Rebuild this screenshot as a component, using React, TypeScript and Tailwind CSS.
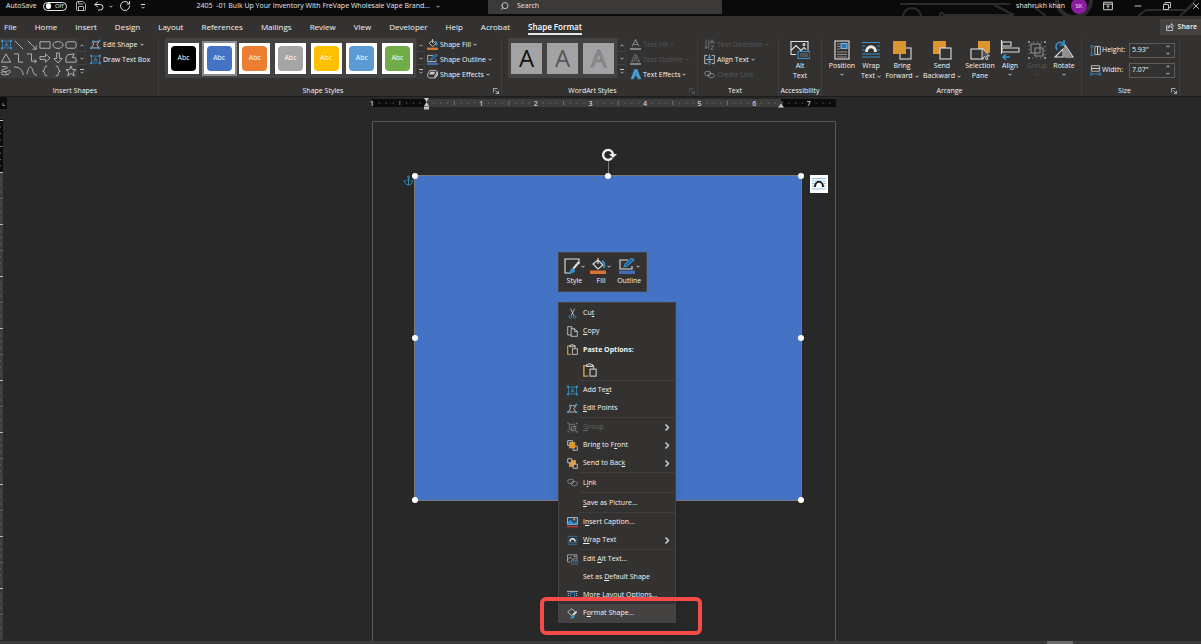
import { useState } from "react";
import type { ReactNode } from "react";
import { Minus, X, Search, Undo2, RotateCw, Anchor, Save } from "lucide-react";
import clsx from "clsx";

interface IconProps {
  children: ReactNode;
  className?: string;
  box?: string;
}

// Thin line icon, stroke follows the text colour
function Icon({ children, className = "size-[11px]", box = "0 0 16 16" }: IconProps) {
  return (
    <svg viewBox={box} className={clsx("shrink-0 opacity-90", className)} fill="none" stroke="currentColor" strokeWidth="1.1" aria-hidden="true">
      {children}
    </svg>
  );
}

function Caret({ className = "w-1 h-[3px]" }: { className?: string }) {
  return (
    <svg viewBox="0 0 8 5" className={clsx("shrink-0", className)} fill="none" stroke="currentColor" strokeWidth="1.6" aria-hidden="true">
      <path d="M1 1l3 3 3-3" />
    </svg>
  );
}

const BLUE = "#3a9bdc";
const ORANGE = "#f0a030";

// ---------- icons ----------

const TextBoxIcon = () => (
  <Icon>
    <rect x="2" y="3" width="12" height="10" stroke={BLUE} />
    <path d="M5.500 11L8 5l2.500 6M6.500 9.500h3" stroke={BLUE} />
    <path d="M0 1h3v3H0zM13 1h3v3h-3zM0 12h3v3H0zM13 12h3v3h-3z" fill={BLUE} stroke="none" />
  </Icon>
);
const EditShapeIcon = () => (
  <Icon>
    <path d="M2 13L5 8 4 4h9l-3 4 3 5H2" />
    <path d="M0 12h3v3H0zM12 12h3v3h-3zM3 2h3v3H3zM12 1h3v3h-3z" fill={BLUE} stroke="none" />
  </Icon>
);
const FillIcon = ({ className }: { className?: string }) => (
  <Icon className={className}>
    <path d="M3 6l5-4 5 5-5 4zM8 6V0" />
    <path d="M12 3c2 1 3 4 2 7" stroke={BLUE} strokeWidth="2" />
    <path d="M0 12.500h16V16H0z" fill="#ed7d31" stroke="none" />
  </Icon>
);
const OutlineIcon = ({ className }: { className?: string }) => (
  <Icon className={className}>
    <path d="M9 2H1v9h12V8" />
    <path d="M5 9l1-3 7-6 2 2-7 6z" stroke={BLUE} fill="#1d5f93" />
    <path d="M0 12.500h16V16H0z" fill="#4472c4" stroke="none" />
  </Icon>
);
const EffectsIcon = () => (
  <Icon>
    <path d="M4 2h9l2 2v5l-3 4H3l-2-2V7z" />
    <path d="M12 13l3-4V4l-4 7z" fill="#8a8a8a" />
    <path d="M5 4h7l-2 4H3z" fill="#d8d8d8" stroke="none" />
  </Icon>
);
const TextFillIcon = () => (
  <Icon className="size-[11px] text-[#8a8a8a]">
    <path d="M3 11L8 1l5 10M5 8h6" strokeWidth="1.600" />
    <path d="M0 13h16v3H0z" fill="currentColor" stroke="none" />
  </Icon>
);
const TextOutlineIcon = () => (
  <Icon className="size-[11px] text-[#8a8a8a]">
    <path d="M2 11L7 1h2l5 10h-3l-1-2H6l-1 2zM7 7h2L8 4z" />
    <path d="M0 13h16v3H0z" fill="currentColor" stroke="none" />
  </Icon>
);
const TextEffectsIcon = () => (
  <Icon>
    <path d="M2 14L7 1h3l5 13h-3l-1-4H6l-1 4zM7 8h3L8.500 4z" stroke={BLUE} strokeWidth="2" fill="#cfe8fa" />
  </Icon>
);
const TextDirectionIcon = () => (
  <Icon className="size-[11px] text-[#8a8a8a]">
    <path d="M3 1v13M1 11l2 3 2-3M7 1v13M9 7l3-6 3 6M10 5h4M10 10h4l-4 5h4" />
  </Icon>
);
const AlignTextIcon = () => (
  <Icon>
    <path d="M5 2H1v12h4M11 2h4v12h-4M3 8h10" />
    <path d="M8 0v6M6 4l2 2 2-2M8 16v-6M6 12l2-2 2 2" stroke={BLUE} strokeWidth="1.600" />
  </Icon>
);
const LinkIcon = () => (
  <Icon className="size-[11px] text-[#a0a0a0]">
    <rect x="1" y="3.500" width="9" height="6" rx="3" />
    <rect x="6" y="6.500" width="9" height="6" rx="3" />
  </Icon>
);
const AltTextIcon = ({ className }: { className?: string }) => (
  <Icon className={className} box="0 0 20 19">
    <path d="M6 14H1V1h17v9M1 10l5-5 5 5 3-3 2 2" />
    <circle cx="14" cy="4" r="1" />
    <rect x="8" y="11" width="12" height="7" stroke={BLUE} fill="#333231" />
    <path d="M10 13.500h8M10 15.500h8" stroke="#777" />
  </Icon>
);
const PositionIcon = () => (
  <Icon className="size-5" box="0 0 20 20">
    <rect x="3" y="1" width="14" height="18" />
    <path d="M5 4h3M5 6.500h3M5 9h3M5 12h10M5 14.500h10M5 17h10" stroke="#999" />
    <rect x="9" y="3.500" width="6" height="5" fill="#2b7fc0" stroke="#8fc4e8" />
  </Icon>
);
const WrapIcon = ({ className = "size-5" }: { className?: string }) => (
  <Icon className={className} box="0 0 20 20">
    <path d="M1 2.500h18M1 6h3M16 6h3M1 10h3M16 10h3M1 14h18M1 17h18" stroke={BLUE} />
    <path d="M5.500 12c0-7 9-7 9 0" strokeWidth="2.800" stroke="#fff" />
  </Icon>
);
const BringIcon = () => (
  <Icon className="size-5" box="0 0 20 20">
    <rect x="8" y="8" width="11" height="11" />
    <rect x="1" y="1" width="13" height="13" fill={ORANGE} stroke="none" />
  </Icon>
);
const SendIcon = () => (
  <Icon className="size-5" box="0 0 20 20">
    <rect x="1" y="1" width="13" height="13" fill={ORANGE} stroke="none" />
    <rect x="8" y="8" width="11" height="11" fill="#333231" />
  </Icon>
);
const SelectionIcon = () => (
  <Icon className="size-5" box="0 0 20 20">
    <rect x="8" y="1" width="12" height="12" fill={ORANGE} stroke="none" />
    <rect x="1" y="9" width="12" height="10" fill="#333231" />
    <path d="M12 8v11l2.500-2.500 2 3.500 1.500-1-1.500-3h3z" fill="#555" stroke="#eee" strokeWidth="0.900" />
  </Icon>
);
const AlignIcon = () => (
  <Icon className="size-5" box="0 0 20 20">
    <path d="M1.500 0v14M2 2h9v4H2zM2 8h17v4H2z" />
    <path d="M10 17H3M6 14L3 17l3 3" stroke={BLUE} strokeWidth="1.600" />
  </Icon>
);
const GroupIcon = ({ className = "size-5" }: { className?: string }) => (
  <Icon className={clsx("text-[#9a9a9a]", className)} box="0 0 20 20">
    <rect x="4" y="4" width="9" height="9" />
    <rect x="8" y="8" width="8" height="8" />
    <path d="M2 2h16v16H2z" strokeDasharray="1 3" />
    <path d="M1 1h2v2H1zM17 1h2v2h-2zM1 17h2v2H1zM17 17h2v2h-2z" fill="currentColor" stroke="none" />
  </Icon>
);
const RotateIcon = () => (
  <Icon className="size-5" box="0 0 20 20">
    <path d="M1 17L9 9v8zM11 17V5l8 12z" />
    <path d="M11 6v11h7z" fill="#999" stroke="none" />
    <path d="M3 10C0 4 5 0 10 4M10 0v5H6" stroke={BLUE} strokeWidth="1.600" />
  </Icon>
);
const CutIcon = () => (
  <Icon>
    <path d="M5 1l5 10M11 1L6 11" />
    <circle cx="5" cy="13" r="2" stroke={BLUE} />
    <circle cx="11" cy="13" r="2" stroke={BLUE} />
  </Icon>
);
const CopyIcon = () => (
  <Icon>
    <path d="M6 13H1V1h6v3M6 4h5l4 4v7H6zM11 4v4h4" />
  </Icon>
);
const PasteIcon = ({ className }: { className?: string }) => (
  <Icon className={className}>
    <path d="M6 15H1V3h11v4" stroke="#e8b04a" strokeWidth="1.600" />
    <path d="M4 4V2h2c0-2 3-2 3 0h2v2z" fill="#555" />
    <rect x="8" y="7" width="7" height="8" fill="#333231" />
  </Icon>
);
const FrontIcon = () => (
  <Icon>
    <path d="M1 1h7v7H1zM9 9h6v6H9z" />
    <rect x="3" y="3" width="9" height="9" fill={ORANGE} stroke="none" />
  </Icon>
);
const BackIcon = () => (
  <Icon>
    <rect x="3" y="3" width="10" height="10" fill={ORANGE} stroke="none" />
    <path d="M1 1h6v6H1zM9 9h6v6H9z" fill="#333231" />
  </Icon>
);
const CaptionIcon = () => (
  <Icon>
    <rect x="1" y="1" width="14" height="10" fill="#17466b" />
    <path d="M1 11V8l4-4 5 5 3-2 2 2v2z" fill={BLUE} stroke="none" />
    <rect x="9" y="2" width="3" height="3" fill={ORANGE} stroke="none" />
    <path d="M0 14h16" stroke="#d9363e" strokeWidth="2" />
  </Icon>
);
const LayoutIcon = () => (
  <Icon>
    <path d="M0 2h16M0 14h16M1 5h2M13 5h2M1 8h2M13 8h2M1 11h2M13 11h2" />
    <rect x="5" y="4" width="6" height="8" stroke={BLUE} />
  </Icon>
);
const FormatShapeIcon = () => (
  <Icon>
    <path d="M1 6l5-5 6 4-5 6z" />
    <path d="M14 5l-5 6" strokeWidth="2" />
    <path d="M9 10c-3 0-2 4-5 5 4 1 7 0 7-3z" fill={BLUE} stroke="none" />
  </Icon>
);
const StyleIcon = () => (
  <Icon className="size-4">
    <path d="M7 15H1V1h14v5" />
    <path d="M15 4l-6 7" strokeWidth="2" />
    <path d="M9 10c-3 0-2 4-5 5 4 1 7 0 7-3z" fill={BLUE} stroke="none" />
  </Icon>
);
const HeightIcon = () => (
  <Icon>
    <path d="M7 2h4v12H7zM11 2h4v12h-4z" />
    <path d="M2.500 2v12M0 1h5M0 15h5M1 4l1.500-2L4 4M1 12l1.500 2L4 12" stroke={BLUE} />
  </Icon>
);
const WidthIcon = () => (
  <Icon>
    <path d="M2 1h12v4H2zM2 5h12v4H2z" />
    <path d="M2 13h12M1 10v6M15 10v6M4 11l-2 2 2 2M12 11l2 2-2 2" stroke={BLUE} />
  </Icon>
);

// ---------- data ----------

const tabs = ["File", "Home", "Insert", "Design", "Layout", "References", "Mailings", "Review", "View", "Developer", "Help", "Acrobat", "Shape Format"];

const shapePaths: { name: string; d: string }[] = [
  { name: "Text box", d: "" },
  { name: "Line", d: "M2 2l9 9" },
  { name: "Arrow", d: "M2 2l9 9M11 7v4H7" },
  { name: "Rectangle", d: "M1 3h11v7H1z" },
  { name: "Oval", d: "M1 6.500a5.500 3.700 0 0 1 11 0a5.500 3.700 0 0 1-11 0z" },
  { name: "Rounded rectangle", d: "M3 3h7q2 0 2 2v3q0 2-2 2H3q-2 0-2-2V5q0-2 2-2z" },
  { name: "Triangle", d: "M6.500 2l5 9h-10z" },
  { name: "Elbow", d: "M1 2h5v9h5" },
  { name: "Elbow arrow", d: "M1 2h5v8h5M9 8l2.500 2L9 12" },
  { name: "Right arrow", d: "M1 5h6V2l5 4.500L7 11V8H1z" },
  { name: "Down arrow", d: "M5 1h3v6h3l-4.500 5L2 7h3z" },
  { name: "Freeform shape", d: "M3 3l7-1-2 4q4-1 4 2v3H1V6z" },
  { name: "Scribble", d: "M2 2c4-1 9 1 4 2S0 7 5 7s6-3 6 0-6 5-9 3 3-5 7 1" },
  { name: "Arc", d: "M1 2c6 0 10 4 10 9" },
  { name: "Curve", d: "M1 10C3 0 6 1 7 5s2 6 5 6" },
  { name: "Left brace", d: "M9 1Q6 1 6 4q0 2-2 2.500Q6 7 6 9q0 3 3 3" },
  { name: "Right brace", d: "M4 1q3 0 3 3 0 2 2 2.500Q7 7 7 9q0 3-3 3" },
  { name: "Star", d: "M6.500 1L8 5h4L9 7.500 10 12 6.500 9 3 12l1-4.500L1 5h4z" },
];

const shapeStyles = [
  { name: "Black", color: "bg-black" },
  { name: "Blue", color: "bg-[#4472c4]" },
  { name: "Orange", color: "bg-[#ed7d31]" },
  { name: "Gray", color: "bg-[#a5a5a5]" },
  { name: "Gold", color: "bg-[#ffc000]" },
  { name: "Light blue", color: "bg-[#5b9bd5]" },
  { name: "Green", color: "bg-[#70ad47]" },
];

interface MenuItem {
  label: string; // "&" goes before the access key
  icon?: ReactNode;
  submenu?: boolean;
  disabled?: boolean;
  active?: boolean;
}

const menuGroups: MenuItem[][] = [
  [
    { label: "Add Te&xt", icon: <TextBoxIcon /> },
    { label: "&Edit Points", icon: <EditShapeIcon /> },
  ],
  [
    { label: "&Group", icon: <GroupIcon className="size-[11px]" />, submenu: true, disabled: true },
    { label: "Bring to F&ront", icon: <FrontIcon />, submenu: true },
    { label: "Send to Bac&k", icon: <BackIcon />, submenu: true },
  ],
  [{ label: "L&ink", icon: <LinkIcon /> }],
  [{ label: "&Save as Picture..." }],
  [
    { label: "I&nsert Caption...", icon: <CaptionIcon /> },
    { label: "&Wrap Text", icon: <WrapIcon className="size-[11px]" />, submenu: true },
  ],
  [
    { label: "Edit &Alt Text...", icon: <AltTextIcon /> },
    { label: "Set as &Default Shape" },
    { label: "More &Layout Options...", icon: <LayoutIcon /> },
    { label: "F&ormat Shape...", icon: <FormatShapeIcon />, active: true },
  ],
];

// ---------- title bar ----------

function TitleBar() {
  const [autoSave, setAutoSave] = useState(false);

  return (
    <header className="relative flex h-4 items-center overflow-hidden bg-[#0a0a0a] pb-1 text-[7px] leading-3 text-gray-200">
      <svg viewBox="0 0 301 16" className="absolute right-0 top-0 h-4 w-[301px]" fill="none" stroke="#2c2c2c" strokeWidth="2" aria-hidden="true">
        <path d="M0 4h110M44 15h70l-20-10M130 4l16 12M238 16l8-6h40l10-10M280 16l14-12" />
        <circle cx="12" cy="17" r="9" />
        <circle cx="42" cy="15" r="2" />
        <circle cx="174" cy="0" r="17" strokeWidth="4" />
      </svg>
      <div className="flex items-center pl-1.5">
        <label htmlFor="autosave" className="mr-1.5">AutoSave</label>
        <button
          id="autosave"
          role="switch"
          aria-checked={autoSave}
          onClick={() => setAutoSave(!autoSave)}
          className="flex h-[9px] w-6 items-center gap-1 rounded-full border border-gray-200 px-0.5 text-[6px] leading-none"
        >
          <span className="size-1.5 rounded-full bg-white" />
          {autoSave ? "On" : "Off"}
        </button>
        <button aria-label="Save" className="ml-2"><Save className="size-3" strokeWidth={1.5} /></button>
        <button aria-label="Undo" className="ml-1.5 flex items-center gap-1"><Undo2 className="size-3" strokeWidth={2} /><Caret /></button>
        <button aria-label="Repeat" className="ml-1.5"><RotateCw className="size-3" strokeWidth={1.8} /></button>
        <button aria-label="Customize toolbar" className="ml-2.5 flex flex-col items-center gap-px"><span className="h-px w-1 bg-current" /><Caret /></button>
      </div>
      <h1 className="ml-13 flex items-center gap-1.5 whitespace-pre">
        2405  -01 Bulk Up Your Inventory With FreVape Wholesale Vape Brand...
        <Caret />
      </h1>
      <label className="ml-12 flex h-4 w-[234px] items-center gap-2 bg-[#3b3a39] pl-3">
        <Search className="size-2.5 -scale-x-100" />
        <input aria-label="Search" placeholder="Search" className="w-full bg-transparent outline-none placeholder:text-gray-200" />
      </label>
      <div className="relative ml-auto flex items-center">
        <span>shahrukh khan</span>
        <span className="ml-1.5 flex size-4 items-center justify-center rounded-full bg-[#8a1ca0] text-[6px]">SK</span>
        <button aria-label="Ribbon display options" className="ml-4">
          <Icon className="size-2.5"><path d="M1 2h14v12H1zM1 5h14M8 12V7M6 9l2-2 2 2" strokeWidth="1.600" /></Icon>
        </button>
        <button aria-label="Minimize" className="ml-5"><Minus className="size-2.5" /></button>
        <button aria-label="Restore" className="ml-5">
          <Icon className="size-2"><path d="M1 5h10v10H1zM4 5V1h11v10h-4" strokeWidth="1.800" /></Icon>
        </button>
        <button aria-label="Close" className="ml-5"><X className="size-2.5" /></button>
      </div>
    </header>
  );
}

// ---------- ribbon ----------

function RibbonGroup({ title, className, launcher, dim, children }: { title: string; className: string; launcher?: boolean; dim?: boolean; children: ReactNode }) {
  return (
    <section className={clsx("relative flex shrink-0 flex-col border-r border-[#3f3e3d]", className)}>
      <div className="flex h-10">{children}</div>
      <h2 className="mt-2 text-center text-[7px] leading-[10px]">{title}</h2>
      {launcher && (
        <button aria-label={`${title} settings`} className={clsx("absolute bottom-0.5 right-0.5", dim && "text-[#666]")}>
          <Icon className="size-1.5"><path d="M1 12V1h11M6 6l8 8M15 7v8H7" strokeWidth="2" /></Icon>
        </button>
      )}
    </section>
  );
}

function GallerySpinner() {
  return (
    <div className="flex w-[9px] shrink-0 flex-col border border-[#3a3938] bg-[#333231] text-[#c8c8c8]">
      <button aria-label="Previous row" className="flex flex-1 items-center justify-center"><Caret className="h-[3px] w-1 rotate-180" /></button>
      <button aria-label="Next row" className="flex flex-1 items-center justify-center border-y border-[#444]"><Caret /></button>
      <button aria-label="More" className="flex flex-1 flex-col items-center justify-center gap-px"><span className="h-px w-1 bg-current" /><Caret /></button>
    </div>
  );
}

function RowButton({ icon, label, caret, disabled }: { icon: ReactNode; label: string; caret?: boolean; disabled?: boolean }) {
  return (
    <button disabled={disabled} className="flex h-[15px] shrink-0 items-center gap-0.5 whitespace-nowrap disabled:text-[#595857]">
      {icon}
      {label}
      {caret && <Caret />}
    </button>
  );
}

function BigButton({ icon, lines, className, caret, disabled }: { icon: ReactNode; lines: string[]; className: string; caret?: boolean; disabled?: boolean }) {
  return (
    <button disabled={disabled} className={clsx("flex flex-col items-center whitespace-nowrap pt-0.5 disabled:text-[#595857]", className)}>
      {icon}
      <span className="mt-px leading-[10px]">{lines[0]}</span>
      <span className="flex h-[10px] items-center gap-0.5 leading-[10px]">
        {lines[1]}
        {caret && <Caret />}
      </span>
    </button>
  );
}

function SizeField({ id, icon, label, value }: { id: string; icon: ReactNode; label: string; value: string }) {
  const [size, setSize] = useState(value);
  return (
    <div className="flex h-4 items-center">
      {icon}
      <label htmlFor={id} className="w-7 shrink-0 pl-px">{label}</label>
      <div className="flex h-[15px] w-[46px] shrink-0 items-center border border-[#5c5b5a]">
        <input id={id} value={size} onChange={(e) => setSize(e.target.value)} className="w-9 bg-transparent pl-0.5 outline-none" />
        <span className="flex flex-col gap-1">
          <button aria-label={`Increase ${id}`} className="flex"><Caret className="h-[3px] w-1 rotate-180" /></button>
          <button aria-label={`Decrease ${id}`} className="flex"><Caret /></button>
        </span>
      </div>
    </div>
  );
}

function Ribbon() {
  const [tab, setTab] = useState("Shape Format");
  const [style, setStyle] = useState("Blue");

  return (
    <div className="border-b border-[#1c1c1c] bg-[#333231] text-[7px] leading-[10px] text-gray-100">
      <nav className="flex h-[22px] items-center gap-[18px] pl-1">
        {tabs.map((t) => (
          <button
            key={t}
            onClick={() => setTab(t)}
            className={clsx("whitespace-nowrap border-b-2 pt-0.5 text-[8px] leading-3", t === tab ? "border-gray-200 font-semibold text-white" : "border-transparent")}
          >
            {t}
          </button>
        ))}
        <button className="ml-auto flex h-4 items-center gap-1 bg-[#444342] pl-1.5 pr-1 font-semibold">
          <Icon className="size-2"><path d="M5 6H1v9h12v-5M4 11c0-5 4-7 7-7V1l4 5-4 4V7c-3 0-5 1-7 4z" strokeWidth="1.500" /></Icon>
          Share
        </button>
      </nav>

      <div className="flex h-[58px]">
        <RibbonGroup title="Insert Shapes" className="w-[159px] pr-2">
          <div className="grid w-[77px] shrink-0 grid-cols-6 content-around bg-[#3d3c3b]">
            {shapePaths.map((s) => (
              <button key={s.name} aria-label={s.name} className="flex items-center justify-center">
                {s.d ? <Icon className="size-3" box="0 0 13 13"><path d={s.d} strokeWidth="1" stroke="#c8c8c8" /></Icon> : <TextBoxIcon />}
              </button>
            ))}
          </div>
          <GallerySpinner />
          <div className="-mt-px flex flex-col pl-1">
            <RowButton icon={<EditShapeIcon />} label="Edit Shape" caret />
            <RowButton icon={<TextBoxIcon />} label="Draw Text Box" />
          </div>
        </RibbonGroup>

        <RibbonGroup title="Shape Styles" className="w-[343px] pl-1.5 pr-5" launcher>
          <div className="flex w-[251px] shrink-0 items-center justify-between bg-[#444342] px-px">
            {shapeStyles.map((s) => (
              <button
                key={s.name}
                aria-label={s.name}
                onClick={() => setStyle(s.name)}
                className={clsx("size-[35px] border-2 p-0", s.name === style ? "border-[#8a8a8a]" : "border-transparent")}
              >
                <span className="flex size-[31px] items-center justify-center bg-white">
                  <span className={clsx("flex size-[25px] items-center justify-center rounded-[4px] text-[7px] text-white", s.color)}>Abc</span>
                </span>
              </button>
            ))}
          </div>
          <GallerySpinner />
          <div className="-mt-px flex flex-col pl-0.5">
            <RowButton icon={<FillIcon />} label="Shape Fill" caret />
            <RowButton icon={<OutlineIcon />} label="Shape Outline" caret />
            <RowButton icon={<EffectsIcon />} label="Shape Effects" caret />
          </div>
        </RibbonGroup>

        <RibbonGroup title="WordArt Styles" className="w-[196px] pl-1.5 pr-5" launcher dim>
          <div className="flex shrink-0 items-center gap-[5px] bg-[#444342] px-[3px] text-[24px] leading-none">
            <button aria-label="Fill black" className="size-[31px] bg-[#a3a3a5] font-medium text-[#111]">A</button>
            <button aria-label="Fill gray" className="size-[31px] bg-[#a3a3a5] font-medium text-[#555]">A</button>
            <button aria-label="Outline gray" className="size-[31px] bg-[#a3a3a5] font-medium text-[#98989a] [-webkit-text-stroke:1px_#7c7c7e]">A</button>
          </div>
          <GallerySpinner />
          <div className="-mt-px flex flex-col pl-1">
            <RowButton icon={<TextFillIcon />} label="Text Fill" caret disabled />
            <RowButton icon={<TextOutlineIcon />} label="Text Outline" caret disabled />
            <RowButton icon={<TextEffectsIcon />} label="Text Effects" caret />
          </div>
        </RibbonGroup>

        <RibbonGroup title="Text" className="w-[81px] pl-1.5 pr-3">
          <div className="-mt-px flex flex-col">
            <RowButton icon={<TextDirectionIcon />} label="Text Direction" caret disabled />
            <RowButton icon={<AlignTextIcon />} label="Align Text" caret />
            <RowButton icon={<LinkIcon />} label="Create Link" disabled />
          </div>
        </RibbonGroup>

        <RibbonGroup title="Accessibility" className="w-[43px]">
          <BigButton icon={<AltTextIcon className="size-5" />} lines={["Alt", "Text"]} className="w-full" />
        </RibbonGroup>

        <RibbonGroup title="Arrange" className="w-[260px] pl-1 pr-2">
          <BigButton icon={<PositionIcon />} lines={["Position", ""]} className="w-8 shrink-0" caret />
          <BigButton icon={<WrapIcon />} lines={["Wrap", "Text"]} className="w-[26px] shrink-0" caret />
          <BigButton icon={<BringIcon />} lines={["Bring", "Forward"]} className="w-9 shrink-0" caret />
          <BigButton icon={<SendIcon />} lines={["Send", "Backward"]} className="w-11 shrink-0" caret />
          <BigButton icon={<SelectionIcon />} lines={["Selection", "Pane"]} className="w-8 shrink-0" />
          <BigButton icon={<AlignIcon />} lines={["Align", ""]} className="w-7 shrink-0" caret />
          <BigButton icon={<GroupIcon />} lines={["Group", ""]} className="w-[26px] shrink-0" caret disabled />
          <BigButton icon={<RotateIcon />} lines={["Rotate", ""]} className="w-7 shrink-0" caret />
        </RibbonGroup>

        <RibbonGroup title="Size" className="w-[98px] pl-2 pr-5" launcher>
          <div className="flex flex-col gap-1 pt-1">
            <SizeField id="height" icon={<HeightIcon />} label="Height:" value={'5.93"'} />
            <SizeField id="width" icon={<WidthIcon />} label="Width:" value={'7.07"'} />
          </div>
        </RibbonGroup>
      </div>
    </div>
  );
}

// ---------- rulers ----------

function HorizontalRuler() {
  const inch = 54.6;
  const marks = Array.from({ length: 67 }, (_, i) => i + 1);
  return (
    <svg viewBox="0 0 464 14" className="h-[14px] w-[464px] overflow-visible" role="img" aria-label="Horizontal ruler">
      <rect y="2" width="464" height="8" fill="#0c0c0c" />
      <rect x="54" y="2" width="355" height="8" fill="#3d3d3d" />
      {marks.map((i) => {
        if (i % 8 === 0) return null;
        const x = (i * inch) / 8;
        return <rect key={i} x={x} y={i % 8 === 4 ? 4 : 5.5} width="1" height={i % 8 === 4 ? 4 : 1} fill="#777" />;
      })}
      {[1, 0, 1, 2, 3, 4, 5, 6, 7].map((n, i) =>
        i === 1 ? null : (
          <text key={i} x={i * inch} y="8.500" fontSize="7" fontWeight="600" fill="#ccc" textAnchor="middle">{n}</text>
        )
      )}
      <path d="M52 1h5l-2.500 4zM52 9l2.500-4 2.500 4zM52 9.500h5v3h-5zM406 10.500l3-4 3 4z" fill="#c4c4c4" />
    </svg>
  );
}

function VerticalRuler() {
  const marks = Array.from({ length: 80 }, (_, i) => i);
  return (
    <svg viewBox="0 0 3 521" className="h-[521px] w-[3px]" role="img" aria-label="Vertical ruler">
      <rect width="3" height="521" fill="#3d3d3d" />
      <rect width="3" height="53" fill="#0c0c0c" />
      {marks.map((i) => (
        <rect key={i} y={i * 6.5 + 1} width={i % 4 === 0 ? 3 : 1} height="1" fill={i % 8 === 0 ? "#bbb" : "#666"} />
      ))}
    </svg>
  );
}

// ---------- popups ----------

function AccessLabel({ text }: { text: string }) {
  const at = text.indexOf("&");
  if (at < 0) return <span>{text}</span>;
  return (
    <span>
      {text.slice(0, at)}
      <u>{text[at + 1]}</u>
      {text.slice(at + 2)}
    </span>
  );
}

function MenuRow({ item, tall }: { item: MenuItem; tall?: boolean }) {
  return (
    <button
      role="menuitem"
      disabled={item.disabled}
      className={clsx("flex w-full items-center pl-2 pr-1 text-left disabled:text-[#666]", tall ? "h-[19px]" : "h-[18px]", item.active && "bg-[#444342]")}
    >
      <span className="w-4">{item.icon}</span>
      <AccessLabel text={item.label} />
      {item.submenu && <Caret className="ml-auto h-[5px] w-2 -rotate-90 text-[#c8c8c8]" />}
    </button>
  );
}

function ContextMenu() {
  return (
    <div role="menu" className="w-[118px] border border-[#454443] bg-[#333231] pt-px text-[7px] leading-[10px] text-gray-100 shadow-lg">
      <MenuRow item={{ label: "Cu&t", icon: <CutIcon /> }} />
      <MenuRow item={{ label: "&Copy", icon: <CopyIcon /> }} />
      <div className="flex h-[19px] items-center pl-2 font-bold">
        <span className="w-4"><PasteIcon /></span>
        Paste Options:
      </div>
      <button role="menuitem" aria-label="Paste" className="ml-6 flex h-[21px] items-center"><PasteIcon className="size-[14px]" /></button>
      {menuGroups.map((group, i) => (
        <div key={i}>
          <hr className="ml-5 border-[#3f3e3d]" />
          {group.map((item) => (
            <MenuRow key={item.label} item={item} tall={group.length === 1} />
          ))}
        </div>
      ))}
    </div>
  );
}

function MiniToolbar() {
  const tools = [
    { label: "Style", icon: <StyleIcon /> },
    { label: "Fill", icon: <FillIcon className="size-4" /> },
    { label: "Outline", icon: <OutlineIcon className="size-4" /> },
  ];
  return (
    <div role="toolbar" className="flex h-10 w-[89px] items-center justify-around border border-[#454443] bg-[#333231] px-0.5 text-[7px] leading-[10px] text-gray-100">
      {tools.map((t) => (
        <button key={t.label} className="flex flex-col items-center gap-0.5">
          <span className="flex items-center gap-px">{t.icon}<Caret /></span>
          {t.label}
        </button>
      ))}
    </div>
  );
}

// ---------- document ----------

const handles = [
  "left-0 top-0", "left-1/2 top-0", "left-full top-0",
  "left-0 top-1/2", "left-full top-1/2",
  "left-0 top-full", "left-1/2 top-full", "left-full top-full",
];

function SelectedShape() {
  return (
    <div className="absolute left-[41px] top-[53px] h-[326px] w-[388px] border border-[#7a7a7a] bg-[#4472c4]">
      {handles.map((h) => (
        <span key={h} className={clsx("absolute size-1.5 -translate-x-1/2 -translate-y-1/2 rounded-full bg-white", h)} />
      ))}
      <span className="absolute -top-4 left-1/2 h-[13px] w-px bg-[#777]" />
      <svg viewBox="0 0 16 14" className="absolute -top-7 left-[186px] h-[14px] w-4" fill="none" stroke="#eee" strokeWidth="2.400" aria-hidden="true">
        <path d="M11 10A5 5 0 1 1 12 6" />
        <path d="M8 6h8l-4 4z" fill="#eee" stroke="none" />
      </svg>
      <Anchor className="absolute -left-[12px] -top-px size-[11px] text-[#2f8fc4]" />
      <button aria-label="Layout options" className="absolute -right-[27px] -top-px flex size-[18px] items-center justify-center bg-white">
        <svg viewBox="0 0 14 14" className="size-[14px]" fill="none" aria-hidden="true">
          <path d="M0 1.500h14M0 4h14M0 6.500h14M0 9h14M0 12h14" stroke="#8fc4e8" strokeWidth="1.200" />
          <path d="M3 10c0-7 8-7 8 0" stroke="#222" strokeWidth="2" fill="#fff" />
        </svg>
      </button>
    </div>
  );
}

export default function App() {
  return (
    <div className="flex min-h-screen flex-col overflow-hidden bg-[#282828] font-['Open_Sans','Noto_Sans',sans-serif]">
      <TitleBar />
      <Ribbon />
      <main className="flex flex-1">
        <aside className="w-[7px]">
          <div className="flex h-3 w-[7px] items-center justify-center bg-[#0c0c0c] text-[7px] text-gray-200">⌞</div>
          <div className="pt-[10px]"><VerticalRuler /></div>
        </aside>
        <div className="flex flex-1 flex-col items-center">
          <HorizontalRuler />
          <article className="relative mt-2.5 w-[464px] flex-1 border border-b-0 border-[#5a5a5a]">
            <SelectedShape />
            <div className="absolute left-[185px] top-[130px]"><MiniToolbar /></div>
            <div className="absolute left-[185px] top-[180px]"><ContextMenu /></div>
            <div className="pointer-events-none absolute left-[167px] top-[475px] h-[38px] w-[162px] rounded-[6px] border-4 border-[#f84b49]" />
          </article>
        </div>
      </main>
      <footer className="flex h-[3px] justify-end bg-[#3b3a39] pr-32">
        <span className="h-full w-[26px] bg-[#6b6a69]" />
      </footer>
    </div>
  );
}
